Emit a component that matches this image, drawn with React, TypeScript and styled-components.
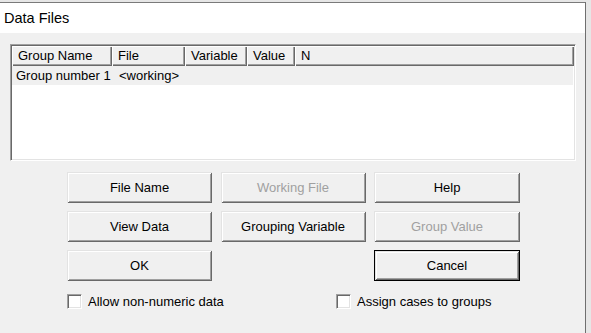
import styled, { createGlobalStyle } from 'styled-components';

const GlobalStyle = createGlobalStyle`
  html, body {
    margin: 0;
    padding: 0;
    background: #e6e6e6;
    font-family: "Liberation Sans", Arial, sans-serif;
    font-size: 13px;
    color: #000;
  }
`;

const Page = styled.div`
  width: 591px;
  height: 333px;
  box-sizing: border-box;
  padding: 2px 5px 0 0;
  background: #e6e6e6;
  overflow: hidden;
`;

const Window = styled.div`
  height: 331px;
  box-sizing: border-box;
  border-top: 1px solid #7a7a7a;
  border-right: 1px solid #6f6f6f;
  display: flex;
  flex-direction: column;
`;

const TitleBar = styled.div`
  height: 30px;
  background: #fff;
  display: flex;
  align-items: center;
  padding-left: 4px;
  font-size: 14.5px;
  color: #000;
`;

const Body = styled.div`
  flex: 1;
  background: #f0f0f0;
  padding: 11px 0 0 10px;
  display: flex;
  flex-direction: column;
`;

const ListBox = styled.div`
  width: 566px;
  height: 117px;
  box-sizing: border-box;
  border-style: solid;
  border-width: 1px;
  border-color: #a0a0a0 #fff #fff #a0a0a0;
  box-shadow: inset 1px 1px 0 #696969, inset -1px -1px 0 #e3e3e3;
  background: #fff;
  padding: 1px;
`;

const HeaderRow = styled.div`
  display: flex;
  height: 20px;
`;

const HeaderCell = styled.div<{ $w?: number }>`
  ${(p) => (p.$w ? `width: ${p.$w}px;` : 'flex: 1;')}
  box-sizing: border-box;
  background: #f0f0f0;
  box-shadow: inset 1px 1px 0 #fff, inset -1px -1px 0 #696969, inset -2px -2px 0 #a0a0a0;
  padding: 2px 0 0 6px;
  white-space: nowrap;
  overflow: hidden;
`;

const DataRow = styled.div`
  display: flex;
  height: 19px;
  align-items: center;
  background: #f0f0f0;
  margin-right: 1px;
`;

const DataCell = styled.div<{ $w?: number; $pad: number }>`
  ${(p) => (p.$w ? `width: ${p.$w}px;` : 'flex: 1;')}
  box-sizing: border-box;
  padding-left: ${(p) => p.$pad}px;
  white-space: nowrap;
`;

const ButtonGrid = styled.div`
  margin: 11px 0 0 57px;
  display: grid;
  grid-template-columns: 145px 145px 146px;
  grid-auto-rows: 31px;
  column-gap: 8.5px;
  row-gap: 8px;
`;

const Button = styled.button<{ $default?: boolean }>`
  font-family: inherit;
  font-size: 13px;
  color: ${(p) => (p.disabled ? '#a0a0a0' : '#000')};
  background: #f0f0f0;
  border: ${(p) => (p.$default ? '1px solid #000' : 'none')};
  box-shadow: inset 1px 1px 0 #e3e3e3, inset -1px -1px 0 #696969,
    inset 2px 2px 0 #fff, inset -2px -2px 0 #a0a0a0;
  padding: 0;
  margin: 0;
`;

const Spacer = styled.div``;

const OptionRow = styled.div`
  margin: 13px 0 0 57px;
  display: grid;
  grid-template-columns: 269px auto;
`;

const Option = styled.label`
  display: flex;
  align-items: center;
  gap: 6px;
  height: 15px;
`;

const CheckBox = styled.span`
  width: 15px;
  height: 15px;
  box-sizing: border-box;
  background: #fff;
  border-style: solid;
  border-width: 1px;
  border-color: #a0a0a0 #fff #fff #a0a0a0;
  box-shadow: inset 1px 1px 0 #696969, inset -1px -1px 0 #e3e3e3;
`;

const columns = [
  { name: 'Group Name', w: 100 },
  { name: 'File', w: 73 },
  { name: 'Variable', w: 62 },
  { name: 'Value', w: 48 },
  { name: 'N' },
];

export default function App() {
  return (
    <Page>
      <GlobalStyle />
      <Window>
        <TitleBar>Data Files</TitleBar>
        <Body>
          <ListBox>
            <HeaderRow>
              {columns.map((c) => (
                <HeaderCell key={c.name} $w={c.w}>
                  {c.name}
                </HeaderCell>
              ))}
            </HeaderRow>
            <DataRow>
              <DataCell $w={100} $pad={4}>Group number 1</DataCell>
              <DataCell $pad={7}>&lt;working&gt;</DataCell>
            </DataRow>
          </ListBox>
          <ButtonGrid>
            <Button>File Name</Button>
            <Button disabled>Working File</Button>
            <Button>Help</Button>
            <Button>View Data</Button>
            <Button>Grouping Variable</Button>
            <Button disabled>Group Value</Button>
            <Button>OK</Button>
            <Spacer />
            <Button $default>Cancel</Button>
          </ButtonGrid>
          <OptionRow>
            <Option>
              <CheckBox />
              Allow non-numeric data
            </Option>
            <Option>
              <CheckBox />
              Assign cases to groups
            </Option>
          </OptionRow>
        </Body>
      </Window>
    </Page>
  );
}
